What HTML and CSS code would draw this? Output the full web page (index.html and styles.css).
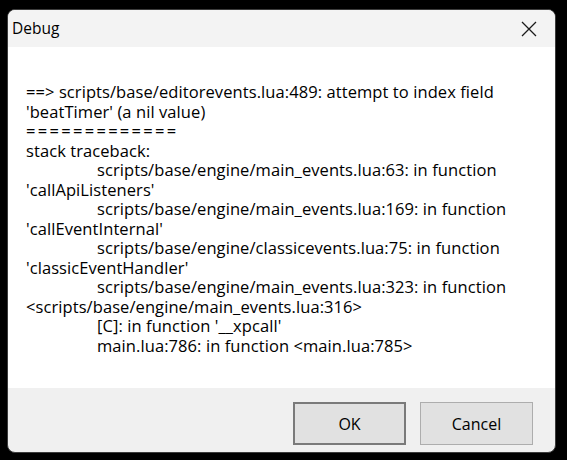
FILE: index.html
```html
<!DOCTYPE html>
<html>
<head>
    <title>Debug</title>
    <link rel="stylesheet" href="styles.css">
</head>
<body>
    <div class="dialog">
        <div class="title-bar">
            <span class="title">Debug</span>
            <svg class="close-icon" width="16" height="16" viewBox="0 0 16 16">
                <path d="M1 1 L15 15 M15 1 L1 15" stroke="#1a1a1a" stroke-width="1.3" fill="none"/>
            </svg>
        </div>
        <div class="message">
            <div class="line">==&gt; scripts/base/editorevents.lua:489: attempt to index field</div>
            <div class="line">'beatTimer' (a nil value)</div>
            <div class="line rule">=============</div>
            <div class="line">stack traceback:</div>
            <div class="line indent">scripts/base/engine/main_events.lua:63: in function</div>
            <div class="line">'callApiListeners'</div>
            <div class="line indent">scripts/base/engine/main_events.lua:169: in function</div>
            <div class="line">'callEventInternal'</div>
            <div class="line indent">scripts/base/engine/classicevents.lua:75: in function</div>
            <div class="line">'classicEventHandler'</div>
            <div class="line indent">scripts/base/engine/main_events.lua:323: in function</div>
            <div class="line">&lt;scripts/base/engine/main_events.lua:316&gt;</div>
            <div class="line indent">[C]: in function '__xpcall'</div>
            <div class="line indent">main.lua:786: in function &lt;main.lua:785&gt;</div>
        </div>
        <div class="button-bar">
            <button class="btn default">OK</button>
            <button class="btn">Cancel</button>
        </div>
    </div>
</body>
</html>
```

FILE: styles.css
```css
body {
    margin: 0;
    padding: 0;
    background-color: #000;
    font-family: 'Open Sans', 'Noto Sans', Arial, sans-serif;
}

.dialog {
    margin-left: 7px;
    margin-top: 9px;
    width: 547px;
    height: 442px;
    border: 1px solid #3c3c3c;
    border-radius: 8px;
    overflow: hidden;
    display: flex;
    flex-direction: column;
    background-color: #f0f0f0;
}

.title-bar {
    height: 37px;
    background-color: #f3f3f3;
    display: flex;
    align-items: center;
    justify-content: space-between;
    padding: 0 18px 0 4px;
}

.title {
    font-size: 15.5px;
    color: #000;
    margin-top: -1px;
}

.close-icon {
    display: block;
}

.message {
    height: 341px;
    background-color: #fff;
    padding: 35px 0 0 18px;
    box-sizing: border-box;
    font-size: 16.5px;
    letter-spacing: 0.08px;
    color: #000;
}

.line {
    height: 19.5px;
    line-height: 19.5px;
    white-space: nowrap;
}

.rule {
    letter-spacing: 2.3px;
}

.indent {
    padding-left: 71px;
}

.button-bar {
    flex: 1;
    display: flex;
    justify-content: flex-end;
    align-items: flex-start;
    gap: 14px;
    padding: 14px 22px 0 0;
}

.btn {
    width: 113px;
    height: 43px;
    font-family: 'Open Sans', 'Noto Sans', Arial, sans-serif;
    font-size: 16px;
    color: #000;
    background-color: #e1e1e1;
    border: 1px solid #adadad;
    padding: 0;
}

.btn.default {
    border: 2px solid #7a7a7a;
}
```
